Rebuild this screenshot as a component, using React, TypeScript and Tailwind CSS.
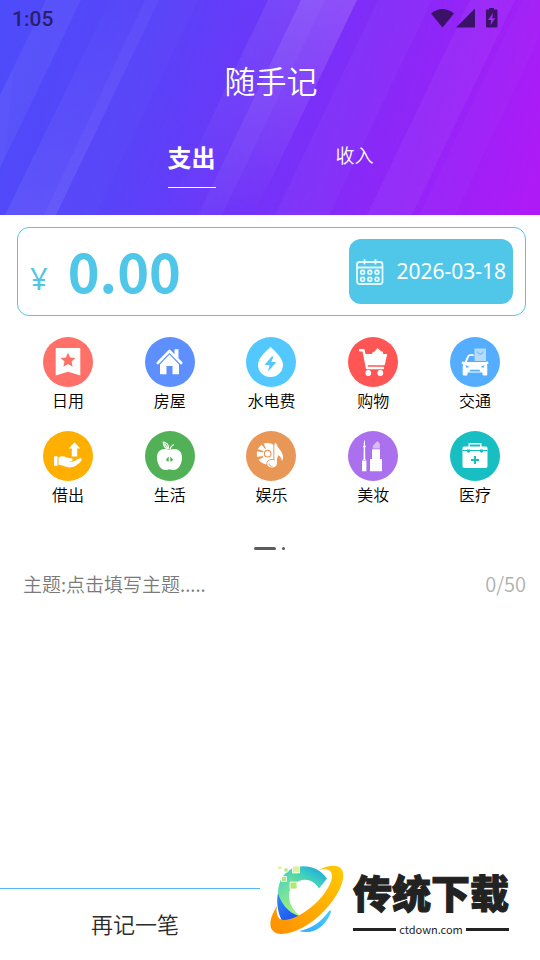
import { useState, type ReactNode } from "react";

const FONT = "font-['Noto_Sans','Noto_Sans_CJK_SC',sans-serif]";

type Category = { label: string; color: string; art: ReactNode };

const rowOne: Category[] = [
  {
    label: "日用",
    color: "bg-[#ff7068]",
    art: (
      <>
        <path fill="#fff" d="M13.500 11h23a.8.8 0 0 1 .8.8V38.500L25 34.800 12.700 38.500V11.800a.8.8 0 0 1 .8-.8z" />
        <path fill="#ff7068" d="M25 15.800l2.200 4.700 5.200.6-3.900 3.500 1.100 5.100-4.600-2.600-4.600 2.600 1.100-5.100-3.900-3.500 5.200-.6z" />
      </>
    ),
  },
  {
    label: "房屋",
    color: "bg-[#5e8fff]",
    art: (
      <>
        <path fill="none" stroke="#fff" strokeWidth="2.600" strokeLinecap="round" strokeLinejoin="round" d="M12.800 26L24.500 14 36.200 26" />
        <path fill="#fff" d="M29.500 12.200h4v9.500l-4-4z" />
        <path fill="#fff" d="M15 27.500L24.500 17.400l9.500 10.100V37.300h-6.500V29h-6v8.300H15z" />
      </>
    ),
  },
  {
    label: "水电费",
    color: "bg-[#53c8ff]",
    art: (
      <>
        <path fill="#fff" d="M24.500 9.800C27 13 37 20 37 28a12.500 12 0 0 1-25 0C12 20 22 13 24.500 9.800z" />
        <path fill="#53c8ff" d="M25.800 19.500L18.500 28h5l-1.500 6.500 8.500-9.500h-5.200l2.200-5.500z" />
      </>
    ),
  },
  {
    label: "购物",
    color: "bg-[#ff5655]",
    art: (
      <>
        <path fill="#fff" d="M24 17c0-1.500 1-2.500 2.300-2.300L29.500 11l3.500 3.300c1.500-.3 2.300 1 2.200 2.700zM16 17h23.200l-2.500 11.200H18z" />
        <path fill="none" stroke="#fff" strokeWidth="2.400" strokeLinecap="round" strokeLinejoin="round" d="M12 13.300h3.500l3.500 17.700h16" />
        <circle cx="20.300" cy="36" r="2.900" fill="#fff" />
        <circle cx="32.300" cy="36" r="2.900" fill="#fff" />
      </>
    ),
  },
  {
    label: "交通",
    color: "bg-[#54adff]",
    art: (
      <>
        <path fill="#b5dbff" d="M24.500 11.500h11.500V24H24.500z" />
        <path fill="none" stroke="#5aa9f5" d="M27.800 14.500c0 3.500 5 3.500 5 0" />
        <path fill="none" stroke="#fff" strokeWidth="1.900" d="M15.500 25.500l2.700-6.200q.5-1.200 2-1.200h3.500" />
        <path fill="#fff" d="M12 24.500l3.200.6h19.700l3.100-.6.500 2-1.500.7.300 2.800v7.500q0 1-1 1h-2.800q-1 0-1-1v-2h-15v2q0 1-1 1h-2.800q-1 0-1-1V30l.3-2.800-1.500-.7z" />
        <path fill="#54adff" d="M15.500 28l4 2-3.200.8zM34.500 28l-4 2 3.200.8zM20.500 32.700h9l1 1.800h-11z" />
      </>
    ),
  },
];

const rowTwo: Category[] = [
  {
    label: "借出",
    color: "bg-[#ffaf00]",
    art: (
      <>
        <path fill="#fff" d="M31.500 11.200l5.700 6.300h-3v8h-5.400v-8h-3zM11 25.300h3.500v9.400H11zM15.500 26.500q4-2.500 8 0l5 .8q2 .7.500 2.700l-4 .3q5 1.500 9-1.800 4.500-2.300 4.800-.4c0 2-2.800 4.800-6.800 7.200-4 2-9 1-12.500-.7l-4-.8z" />
      </>
    ),
  },
  {
    label: "生活",
    color: "bg-[#52b157]",
    art: (
      <>
        <path fill="#fff" d="M24.500 19.200c6-3 12.500-.5 12.500 7.300 0 6.500-3.500 12.500-8.500 12.500-1.800 0-2.600-.8-4-.8s-2.200.8-4 .8c-5 0-8.500-6-8.500-12.500 0-7.800 6.500-10.300 12.500-7.300z" />
        <path fill="none" stroke="#fff" strokeWidth="1.200" d="M24.800 19.500c.2-2.500 1.500-4.500 4-6M23.300 17.800c-3.500-.5-5-3.500-5-6.800 3.500.7 5.800 3 5 6.800zM19.500 12.500l4 5.500" />
        <path fill="#52b157" d="M23.700 25.500v5q-3-.5-2.500-2 .5-1 2.500-3zM25.300 25.500v5q3-.5 2.500-2-.5-1-2.500-3z" />
      </>
    ),
  },
  {
    label: "娱乐",
    color: "bg-[#e99756]",
    art: (
      <>
        <circle cx="21.500" cy="22.700" r="10.700" fill="#fff" />
        <circle cx="21.700" cy="22.700" r="3.300" fill="none" stroke="#e99756" strokeWidth="1.100" />
        <path fill="#e99756" d="M11.500 18l6 2.200-.6 1.300-6-1.300zM10.900 26l5.800-1 .8 1.300-5.400 2.600zM15.500 13.400l3.600 4.700.9-.6-2.400-5.100z" />
        <path fill="#e99756" d="M27.300 12h1.300v16h-1.300z" />
        <path fill="#fff" d="M28.500 12.300h1.800c1 5 6.500 7.700 6.700 13.700 0 1.600-.3 2.800-1 4-.5-3.600-2.300-5.500-5.200-6.300V32h-2.300z" />
        <ellipse cx="26" cy="32.700" rx="5.200" ry="4.400" fill="#fff" stroke="#e99756" strokeWidth=".9" />
        <path fill="none" stroke="#e99756" strokeWidth=".9" d="M23 32.500c0 2 1.500 3 3.500 2.800" />
        <path fill="#fff" d="M29 28h1.800v5H29z" />
      </>
    ),
  },
  {
    label: "美妆",
    color: "bg-[#aa70ed]",
    art: (
      <>
        <path fill="#fff" d="M16 9.500h.8l.3 5 .9.800-.9 1.500.2 11.700h.6v.5h-3v-.5h.6l.2-11.700-.9-1.500.9-.8zM14 29.500h4.400v10.700H14zM24 18.300h8v9.700h2v12.200H22V28h2z" />
        <path fill="#d7bcf8" d="M24.800 17.500v-2.800L29.500 10l2.300 2.800v4.700z" />
      </>
    ),
  },
  {
    label: "医疗",
    color: "bg-[#18bfc2]",
    art: (
      <>
        <path fill="none" stroke="#fff" strokeWidth="1.400" d="M19.200 16v-3.300h11.600v3.300" />
        <path fill="#fff" d="M14 15.500h22q1.500 0 1.500 1.500v18q0 2-2 2h-21q-2 0-2-2V17q0-1.500 1.500-1.500z" />
        <path fill="none" stroke="#18bfc2" strokeWidth="1.200" d="M12.500 19.500h25" />
        <path fill="#18bfc2" d="M17 18.500h3V21q-1.500 1.500-3 0zM30 18.500h3V21q-1.500 1.500-3 0zM24 25h2v3h3v2h-3v3h-2v-3h-3v-2h3z" />
      </>
    ),
  },
];

function CategoryRow({ items }: { items: Category[] }) {
  return (
    <div className="grid grid-cols-5">
      {items.map((c) => (
        <button key={c.label} type="button" className="flex flex-col items-center gap-0.5">
          <span className={`size-[50px] overflow-hidden rounded-full ${c.color}`}>
            <svg viewBox="0 0 50 50" className="size-full" aria-hidden="true">
              {c.art}
            </svg>
          </span>
          <span className="text-base leading-6 font-[350] text-black">{c.label}</span>
        </button>
      ))}
    </div>
  );
}

function HeaderArt() {
  return (
    <svg
      className="absolute inset-0 size-full"
      viewBox="0 0 540 215"
      preserveAspectRatio="none"
      aria-hidden="true"
    >
      <defs>
        <linearGradient id="sky" gradientUnits="userSpaceOnUse" x1="0" y1="50" x2="530" y2="200">
          <stop offset="0" stopColor="#4e4bfa" />
          <stop offset=".25" stopColor="#5744f9" />
          <stop offset=".5" stopColor="#7134f8" />
          <stop offset=".75" stopColor="#8f26f8" />
          <stop offset="1" stopColor="#ae1af6" />
        </linearGradient>
        <linearGradient id="rise" x1="0" y1="0" x2="0" y2="1">
          <stop offset="0" stopColor="#fff" stopOpacity=".01" />
          <stop offset="1" stopColor="#fff" stopOpacity=".07" />
        </linearGradient>
        <linearGradient id="fall" x1="0" y1="0" x2="0" y2="1">
          <stop offset="0" stopColor="#fff" stopOpacity=".08" />
          <stop offset="1" stopColor="#fff" stopOpacity="0" />
        </linearGradient>
      </defs>
      <path fill="url(#sky)" d="M0 0h540v215H0z" />
      <path fill="url(#rise)" d="M110 0h49L56 215H5z" />
      <path fill="url(#fall)" d="M268 0h89L254 215H165z" />
      <path fill="url(#fall)" d="M301 0h56L254 215H198z" />
      <g fill="#fff">
        <path opacity=".05" d="M46 0h35L0 168V95z" />
        <path opacity=".02" d="M14 66L5 158 0 168V95z" />
        <path opacity=".035" d="M145 0h14L56 215H44z" />
        <path opacity=".015" d="M159 0h39L95 215H56z" />
        <path opacity=".03" d="M301 0h24L222 215h-24z" />
        <path opacity=".03" d="M378 0h54L329 215h-54z" />
        <path opacity=".045" d="M470 0h45L412 215h-45z" />
        <path opacity=".02" d="M522 0l35 0L455 215h-36z" />
      </g>
    </svg>
  );
}

function StatusIcons() {
  return (
    <svg viewBox="0 0 68 20" className="mb-0.5 h-5 w-[68px]" fill="#3b1267" aria-hidden="true">
      <path d="M0 5.500Q11.500-3.500 23 5.500L11.500 19.500z" />
      <path d="M44 .5V19.500H25z" />
      <path
        fillRule="evenodd"
        d="M58 0h5v1.500h2.500q1 0 1 1v16q0 1-1 1h-9.500q-1 0-1-1v-16q0-1 1-1h2zM62 5l-5 7h3.200l-.8 5.200 4.800-7h-3z"
      />
    </svg>
  );
}

function CalendarIcon() {
  return (
    <svg viewBox="0 0 28 26" className="h-[26px] w-7 shrink-0" fill="none" stroke="#e6f8fd" strokeWidth="1.800" aria-hidden="true">
      <rect x="1" y="3" width="25.500" height="22" rx="2.500" />
      <path d="M1 8.500h25.500M8.500 0v5.500M19.500 0v5.500" />
      <g>
        <rect x="4.800" y="11.500" width="3.600" height="3.600" rx="1.200" />
        <rect x="12" y="11.500" width="3.600" height="3.600" rx="1.200" />
        <rect x="19.200" y="11.500" width="3.600" height="3.600" rx="1.200" />
        <rect x="4.800" y="18.500" width="3.600" height="3.600" rx="1.200" />
        <rect x="12" y="18.500" width="3.600" height="3.600" rx="1.200" />
        <rect x="19.200" y="18.500" width="3.600" height="3.600" rx="1.200" />
      </g>
    </svg>
  );
}

function SiteMark() {
  return (
    <div className="absolute right-0 bottom-0 flex h-[105px] w-[280px] bg-white pl-2">
      <svg viewBox="268 855 80 85" className="h-[85px] w-20 shrink-0" aria-hidden="true">
        <defs>
          <linearGradient id="cTop" x1="0" y1="1" x2="1" y2="0">
            <stop offset="0" stopColor="#8be87c" />
            <stop offset=".5" stopColor="#3ed0bd" />
            <stop offset="1" stopColor="#139bea" />
          </linearGradient>
          <linearGradient id="cBody" x1="0" y1="0" x2=".3" y2="1">
            <stop offset="0" stopColor="#2fc5dc" />
            <stop offset=".5" stopColor="#6fe0a0" />
            <stop offset="1" stopColor="#9df07c" />
          </linearGradient>
          <linearGradient id="cSide" x1="0" y1="0" x2=".6" y2="1">
            <stop offset="0" stopColor="#2f8df0" />
            <stop offset="1" stopColor="#1f55f5" />
          </linearGradient>
          <linearGradient id="cLow" x1="0" y1="1" x2="1" y2="0">
            <stop offset="0" stopColor="#37a6ff" />
            <stop offset="1" stopColor="#45d0fb" />
          </linearGradient>
          <linearGradient id="ring" x1="0" y1="1" x2="1" y2="0">
            <stop offset="0" stopColor="#ff8e00" />
            <stop offset="1" stopColor="#ffca05" />
          </linearGradient>
        </defs>
        <path fill="url(#cBody)" d="M296 867c-12 4-18 14-18 26 0 10 6 18 12 25l10-2c-12-10-14-22-7-32z" />
        <path fill="url(#cTop)" d="M292 868.500c12-5 27-2 35 10l-8 10c-6-10-18-12-26-3-5-3-5-12-1-17z" />
        <path fill="url(#cSide)" d="M278 893c3 10 10 20 21 23l-3 4-14 1c-4-8-6-19-4-28z" />
        <path fill="url(#cLow)" d="M299 931c12-2 22-9 30-20l2.500-.5c-5 15-17 25-32.500 20.500z" />
        <path
          fill="url(#ring)"
          d="M319 870c9-5 20-6 23 0 4 8-2 24-17 40-17 18-38 27-49 23-9-4-6-16 1-27-1 6 0 11 3 13 8 4 25-5 38-18 12-13 17-25 12-30-2-2-6-2-11-1z"
        />
        <g fill="#b5e67a" stroke="#fff" strokeWidth=".8">
          <path d="M290 882h7v7h-7zM281.500 876.500h5v5h-5zM284 868h4v4h-4z" />
          <path fill="#dff09a" d="M292.500 866h7v7h-7zM278 866h3.500v3.500H278z" />
        </g>
      </svg>
      <div className="flex w-[160px] flex-col pt-3 pl-[5px] text-[#222]">
        <div className="text-[39px] leading-[52px] font-black whitespace-nowrap [-webkit-text-stroke:1px_#222]">传统下载</div>
        <div className="flex w-[156px] items-center gap-[3px]">
          <span className="h-[3px] flex-1 bg-[#222]" />
          <span className="font-['Noto_Sans_CJK_SC',sans-serif] text-[11px] leading-5">ctdown.com</span>
          <span className="h-[3px] flex-1 bg-[#222]" />
        </div>
      </div>
    </div>
  );
}

export default function App() {
  const [tab, setTab] = useState<"out" | "in">("out");
  const [amount, setAmount] = useState("0.00");
  const [topic, setTopic] = useState("");

  const tabClass = (on: boolean) =>
    on
      ? "border-b border-white text-2xl leading-6 font-bold h-[42px] pb-[18px]"
      : "text-[19px] leading-5 font-[350] h-[42px] pb-[22px]";

  return (
    <div className={`relative flex min-h-screen flex-col bg-white ${FONT}`}>
      <header className="relative h-[215px] overflow-hidden text-white">
        <HeaderArt />
        <div className="relative flex h-full flex-col">
          <div className="flex h-[38px] items-center justify-between pr-[41px] pl-3">
            <span className="font-[Roboto,sans-serif] text-[21px] leading-6 font-medium text-[#2a1f6b]">1:05</span>
            <StatusIcons />
          </div>
          <h1 className="mt-5 pl-0.5 text-center text-[31px] leading-[46px] font-[350]">随手记</h1>
          <div role="tablist" className="mt-[42px] grid grid-cols-2 items-start pr-[104px] pl-[110px]">
            <div className="flex justify-center">
              <button type="button" role="tab" aria-selected={tab === "out"} onClick={() => setTab("out")} className={tabClass(tab === "out")}>
                支出
              </button>
            </div>
            <div className="flex justify-center">
              <button type="button" role="tab" aria-selected={tab === "in"} onClick={() => setTab("in")} className={tabClass(tab === "in")}>
                收入
              </button>
            </div>
          </div>
        </div>
      </header>

      <main className="flex flex-1 flex-col pt-3 pr-3.5 pl-[17px]">
        <div className="flex h-[89px] items-center rounded-xl border border-[#50c7e8] pr-3 pl-3 text-[#50c7e8]">
          <label htmlFor="amount" className="pt-3 text-[31px] leading-10">
            ¥
          </label>
          <input
            id="amount"
            inputMode="decimal"
            value={amount}
            onChange={(e) => setAmount(e.target.value)}
            className="mb-1 ml-5 h-16 min-w-0 flex-1 bg-transparent font-['Noto_Sans_CJK_SC',sans-serif] text-[54px] font-bold outline-none"
          />
          <button type="button" className="flex h-[65px] items-center gap-3 rounded-xl bg-[#50c7e8] px-[7px] text-[21px] text-white">
            <CalendarIcon />
            2026-03-18
          </button>
        </div>

        <div className="mt-[21px] flex flex-col gap-[18px]">
          <CategoryRow items={rowOne} />
          <CategoryRow items={rowTwo} />
        </div>

        <div className="mt-10 flex items-center justify-center gap-1.5 pr-1" aria-hidden="true">
          <span className="h-[3px] w-[22px] rounded-full bg-[#5c5c5c]" />
          <span className="size-[3px] rounded-full bg-[#5c5c5c]" />
        </div>

        <label className="mt-4 flex h-9 items-center pl-1.5 font-['Noto_Sans_CJK_SC',sans-serif] font-[350]">
          <input
            aria-label="主题"
            maxLength={50}
            value={topic}
            onChange={(e) => setTopic(e.target.value)}
            placeholder="主题:点击填写主题....."
            className="min-w-0 flex-1 bg-transparent text-[19px] leading-7 outline-none placeholder:text-[#7a7a7a]"
          />
          <span className="text-xl leading-7 text-[#b0b0b0]">{topic.length}/50</span>
        </label>
      </main>

      <footer className="flex h-[72px]">
        <button type="button" className="w-1/2 border-t border-[#54b4f5] text-[22px] font-[350] text-[#2b2b2b]">
          再记一笔
        </button>
      </footer>
      <SiteMark />
    </div>
  );
}
